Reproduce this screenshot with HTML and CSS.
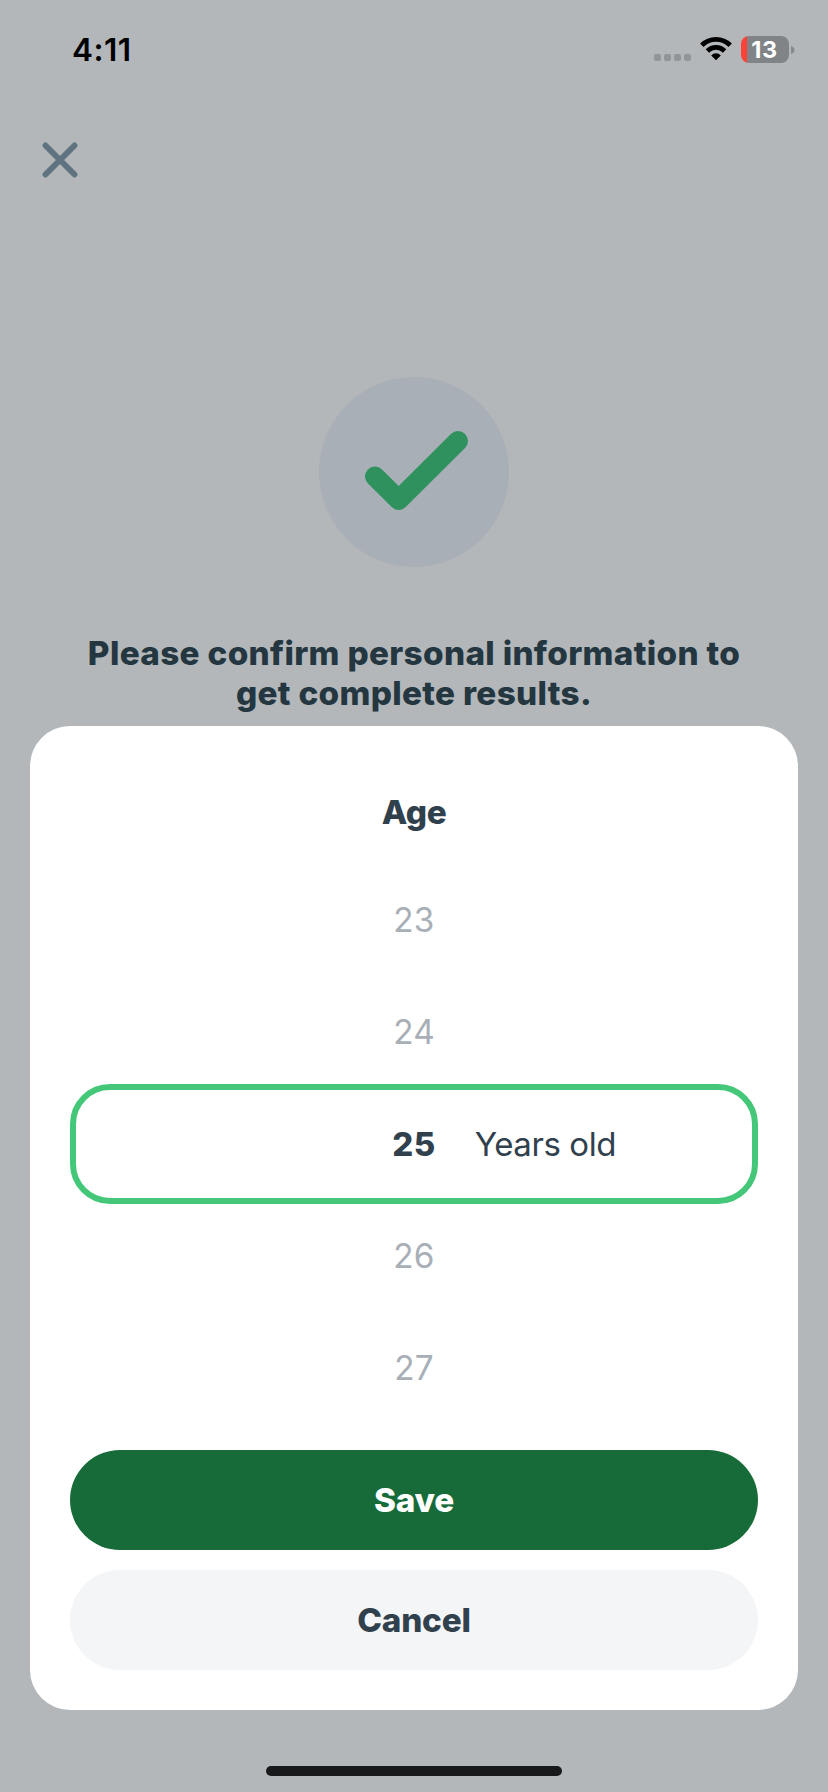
FILE: index.html
```html
<!DOCTYPE html>
<html lang="en">
<head>
<meta charset="utf-8">
<title>Confirm age</title>
<link rel="stylesheet" href="styles.css">
</head>
<body>
<div class="screen">
  <header class="status">
    <span class="time">4:11</span>
    <div class="indicators">
      <div class="signal"><i></i><i></i><i></i><i></i></div>
      <svg class="wifi" width="32" height="25" viewBox="0 0 32 25">
        <path d="M1.8 9.2A20 20 0 0 1 30.2 9.2" fill="none" stroke="#000" stroke-width="4.8"/>
        <path d="M7.4 15A12.2 12.2 0 0 1 24.6 15" fill="none" stroke="#000" stroke-width="4.8"/>
        <path d="M11.2 19.4A6.7 6.7 0 0 1 20.8 19.4L16 24.2Z" fill="#000"/>
      </svg>
      <div class="battery"><span class="level">13</span></div>
      <svg class="nub" width="4" height="8" viewBox="0 0 4 8"><path d="M0 0Q3.5 1.2 3.5 4T0 8Z" fill="#87898b"/></svg>
    </div>
  </header>
  <main class="page">
    <svg class="close" width="36" height="36" viewBox="0 0 36 36">
      <path d="M3.5 3.5L32.5 32.5M32.5 3.5L3.5 32.5" stroke="#5f7480" stroke-width="6" stroke-linecap="round"/>
    </svg>
    <svg class="badge" width="190" height="190" viewBox="0 0 190 190">
      <circle cx="95" cy="95" r="95" fill="#a9afb6"/>
      <path d="M56 99.5L79.7 123L139 64" fill="none" stroke="#2f925e" stroke-width="20" stroke-linecap="round" stroke-linejoin="round"/>
    </svg>
    <h1 class="heading">Please confirm personal information to<br>get complete results.</h1>
  </main>
  <section class="sheet">
    <h2 class="title">Age</h2>
    <div class="picker">
      <div class="option">23</div>
      <div class="option">24</div>
      <div class="selected"><span></span><b class="value">25</b><span class="unit">Years old</span></div>
      <div class="option">26</div>
      <div class="option">27</div>
    </div>
    <button class="button save">Save</button>
    <button class="button cancel">Cancel</button>
  </section>
  <div class="home"></div>
</div>
</body>
</html>
```
FILE: styles.css
```css
* { box-sizing: border-box; }
body { margin: 0; background: #b3b7ba; font-family: Inter, "Liberation Sans", sans-serif; color: #30414d; }
.screen { width: 828px; height: 1792px; display: flex; flex-direction: column; overflow: hidden; }
.status { height: 100px; flex: none; display: flex; justify-content: space-between; padding: 0 33px 0 72px; color: #000; }
.time { font-size: 31.5px; font-weight: 600; line-height: 40px; padding-top: 30px; letter-spacing: 0.5px; }
.indicators { display: flex; align-items: flex-start; padding-top: 36px; }
.signal { display: flex; gap: 3px; margin: 18px 9px 0 0; }
.signal i { width: 7px; height: 7px; border-radius: 2px; background: #919598; }
.wifi { margin-right: 9px; }
.battery { width: 48px; height: 27px; border-radius: 8px; background: linear-gradient(90deg, #fc4338 6px, #808486 6px); display: flex; align-items: center; justify-content: center; }
.level { color: #fff; font-size: 23.5px; font-weight: 700; line-height: 27px; letter-spacing: 0.5px; padding-right: 1px; }
.nub { margin: 10px 0 0 2px; }
.page { height: 626px; flex: none; display: flex; flex-direction: column; }
.close { margin: 42px 0 0 42px; flex: none; }
.badge { margin: 199px auto 0; flex: none; }
.heading { margin: 66px 0 0; font-size: 33.3px; line-height: 40px; font-weight: 800; letter-spacing: 0.32px; text-align: center; color: #243640; white-space: nowrap; }
.sheet { margin: 0 30px; height: 984px; flex: none; padding: 66px 40px 40px; border-radius: 40px; background: #fff; display: flex; flex-direction: column; }
.title { margin: 0; font-size: 33.3px; line-height: 40px; font-weight: 800; letter-spacing: -0.4px; text-align: center; }
.picker { margin: 32px 0 26px; display: flex; flex-direction: column; }
.option { height: 112px; line-height: 112px; font-size: 33.3px; letter-spacing: 0.2px; text-align: center; color: #a9afb7; }
.selected { height: 120px; margin: -4px 0; border: 6px solid #44c779; border-radius: 40px; display: grid; grid-template-columns: 1fr auto 1fr; align-items: center; font-size: 33px; }
.value { font-weight: 800; letter-spacing: 0.4px; }
.unit { padding-left: 39px; letter-spacing: -0.4px; }
.button { height: 100px; border: 0; border-radius: 50px; padding: 0; font: 800 33.3px/100px Inter, "Liberation Sans", sans-serif; letter-spacing: -0.2px; }
.save { background: #166b38; color: #fff; }
.cancel { margin-top: 20px; background: #f3f5f7; color: #30414d; }
.home { width: 296px; height: 10px; margin: 56px auto 0; border-radius: 5px; background: #18191b; }
```
